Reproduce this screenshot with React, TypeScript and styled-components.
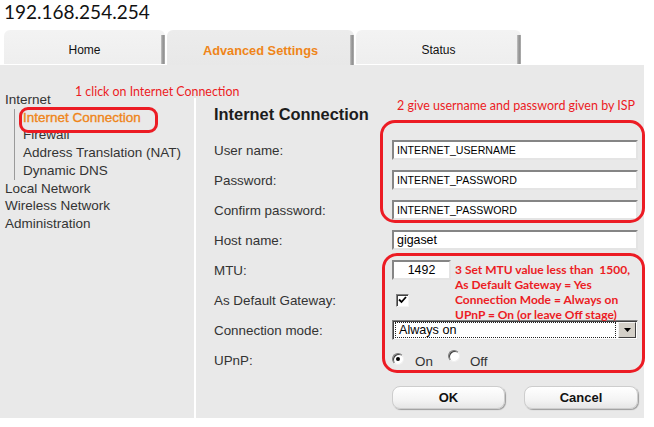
import React from 'react';
import styled, { createGlobalStyle } from 'styled-components';

const GlobalStyle = createGlobalStyle`
  html, body { margin: 0; padding: 0; background: #ffffff; }
  body { font-family: "Liberation Sans", Arial, sans-serif; }
  * { box-sizing: border-box; }
`;

const RED = '#ec1c24';
const ORANGE = '#ef8519';

const Page = styled.div`
  position: relative;
  width: 654px;
  height: 427px;
  overflow: hidden;
`;

const Address = styled.div`
  height: 30px;
  padding-left: 4px;
  font-family: Lato, "Liberation Sans", sans-serif;
  font-size: 19px;
  line-height: 24px;
  color: #111;
`;

const TabBar = styled.div`
  display: flex;
  align-items: flex-start;
  gap: 2px;
  height: 35px;
  padding-left: 4px;
`;

const Tab = styled.div<{ $w: number; $active?: boolean }>`
  position: relative;
  width: ${({ $w }) => $w}px;
  height: ${({ $active }) => ($active ? 35 : 34)}px;
  padding-top: 6px;
  display: flex;
  align-items: center;
  justify-content: center;
  border-radius: 6px 6px 0 0;
  background: ${({ $active }) =>
    $active ? 'linear-gradient(#ececec, #e8e8e8)' : 'linear-gradient(#f3f3f3, #eeeeee)'};
  color: ${({ $active }) => ($active ? ORANGE : '#111')};
  font-size: ${({ $active }) => ($active ? 12.8 : 12)}px;
  font-weight: ${({ $active }) => ($active ? 'bold' : 'normal')};

  &::after {
    content: '';
    position: absolute;
    right: 0;
    top: 5px;
    bottom: 0;
    width: 4px;
    background: linear-gradient(to right, #c4c4c4, #8e8e8e 55%, #b0b0b0);
  }
`;

const Panel = styled.div`
  display: flex;
  width: 644px;
  background: #e9e9e9;
`;

const Sidebar = styled.div`
  width: 194px;
  padding-top: 26px;
  font-size: 13.5px;
  line-height: 17.7px;
  color: #333;
`;

const NavItem = styled.div<{ $sub?: boolean; $current?: boolean }>`
  padding-left: ${({ $sub }) => ($sub ? 8 : 5)}px;
  white-space: nowrap;
  color: ${({ $current }) => ($current ? ORANGE : '#333')};
  -webkit-text-stroke: ${({ $current }) => ($current ? `0.35px ${ORANGE}` : '0')};
`;

const SubList = styled.div`
  margin-left: 14px;
  border-left: 1px solid #9a9a9a;
`;

const Divider = styled.div`
  width: 2px;
  margin-top: 33px;
  background: #ffffff;
`;

const Content = styled.div`
  flex: 1;
  padding: 39px 6px 9px 18px;
`;

const Heading = styled.h3`
  margin: 0 0 11px;
  font-size: 16.4px;
  line-height: 20px;
  font-weight: bold;
  color: #1c1c1c;
`;

const Form = styled.div`
  display: grid;
  grid-template-columns: 178px 246px;
  grid-auto-rows: 30px;
  align-items: center;
`;

const Label = styled.div`
  font-size: 13.4px;
  color: #333;
  white-space: nowrap;
`;

const Field = styled.input<{ $w?: number; $center?: boolean; $big?: boolean }>`
  display: block;
  width: ${({ $w }) => $w ?? 246}px;
  height: 20px;
  margin: 0;
  padding: 0 3px;
  border: 2px solid;
  border-color: #858585 #e4e4e4 #e4e4e4 #858585;
  background: #fff;
  font-family: "Liberation Sans", Arial, sans-serif;
  font-size: ${({ $big }) => ($big ? 12.4 : 10.6)}px;
  color: #000;
  text-align: ${({ $center }) => ($center ? 'center' : 'left')};
  outline: none;
`;

const Check = styled.span`
  display: flex;
  align-items: center;
  justify-content: center;
  width: 13px;
  height: 13px;
  margin-left: 4px;
  border: 1px solid;
  border-color: #808080 #f4f4f4 #f4f4f4 #808080;
  background: #fff;
  box-shadow: inset 1px 1px 0 #404040;
`;

const Select = styled.div`
  display: flex;
  align-items: center;
  width: 246px;
  height: 20px;
  padding: 1px;
  border: 1px solid;
  border-color: #808080 #e4e4e4 #e4e4e4 #808080;
  background: #fff;
  box-shadow: inset 1px 1px 0 #404040;
`;

const SelectValue = styled.div`
  flex: 1;
  height: 16px;
  margin: 0 2px 0 1px;
  padding-left: 3px;
  border: 1px dotted #222;
  font-size: 12.6px;
  line-height: 14px;
  color: #000;
`;

const SelectArrow = styled.div`
  display: flex;
  align-items: center;
  justify-content: center;
  width: 18px;
  height: 16px;
  background: #d4d0c8;
  border: 1px solid;
  border-color: #f4f4f4 #404040 #404040 #f4f4f4;
`;

const RadioGroup = styled.div`
  display: flex;
  align-items: center;
  font-size: 13.4px;
  color: #333;
`;

const Radio = styled.span<{ $on?: boolean; $lift?: boolean }>`
  position: relative;
  display: inline-block;
  width: 12px;
  height: 12px;
  border-radius: 50%;
  border: 1px solid;
  border-color: #7a7a7a #f0f0f0 #f0f0f0 #7a7a7a;
  background: #fff;
  box-shadow: inset 1px 1px 0 #404040;
  transform: translateY(${({ $lift }) => ($lift ? -4 : -1)}px);

  &::after {
    content: '';
    display: ${({ $on }) => ($on ? 'block' : 'none')};
    position: absolute;
    left: 3px;
    top: 3px;
    width: 4px;
    height: 4px;
    border-radius: 50%;
    background: #000;
  }
`;

const RadioText = styled.span<{ $gap: number }>`
  margin-left: ${({ $gap }) => $gap}px;
  margin-right: 15px;
  padding-top: 3px;
`;

const ButtonRow = styled.div`
  display: flex;
  gap: 19px;
  margin-top: 11px;
  padding-left: 178px;
`;

const Button = styled.button<{ $w: number }>`
  width: ${({ $w }) => $w}px;
  height: 23px;
  padding: 0;
  border: 1px solid #cdcdcd;
  border-radius: 8px;
  background: linear-gradient(#ffffff, #f4f4f4 60%, #e6e6e6);
  box-shadow: 1px 1px 1px #9c9c9c;
  font-family: "Liberation Sans", Arial, sans-serif;
  font-size: 13px;
  font-weight: bold;
  color: #111;
`;

const Ring = styled.div<{ $x: number; $y: number; $w: number; $h: number; $r: number }>`
  position: absolute;
  left: ${({ $x }) => $x}px;
  top: ${({ $y }) => $y}px;
  width: ${({ $w }) => $w}px;
  height: ${({ $h }) => $h}px;
  border: 3px solid ${RED};
  border-radius: ${({ $r }) => $r}px;
  pointer-events: none;
`;

const Note = styled.div<{ $x: number; $y: number; $size: number; $bold?: boolean }>`
  position: absolute;
  left: ${({ $x }) => $x}px;
  top: ${({ $y }) => $y}px;
  font-family: Lato, "Liberation Sans", sans-serif;
  font-size: ${({ $size }) => $size}px;
  font-weight: ${({ $bold }) => ($bold ? 'bold' : 'normal')};
  line-height: 15px;
  color: ${RED};
  white-space: pre;
`;

export default function App() {
  return (
    <Page>
      <GlobalStyle />
      <Address>192.168.254.254</Address>
      <TabBar>
        <Tab $w={161}>Home</Tab>
        <Tab $w={187} $active>
          Advanced Settings
        </Tab>
        <Tab $w={165}>Status</Tab>
      </TabBar>
      <Panel>
        <Sidebar>
          <NavItem>Internet</NavItem>
          <SubList>
            <NavItem $sub $current>
              Internet Connection
            </NavItem>
            <NavItem $sub>Firewall</NavItem>
            <NavItem $sub>Address Translation (NAT)</NavItem>
            <NavItem $sub>Dynamic DNS</NavItem>
          </SubList>
          <NavItem>Local Network</NavItem>
          <NavItem>Wireless Network</NavItem>
          <NavItem>Administration</NavItem>
        </Sidebar>
        <Divider />
        <Content>
          <Heading>Internet Connection</Heading>
          <Form>
            <Label>User name:</Label>
            <Field readOnly value="INTERNET_USERNAME" />
            <Label>Password:</Label>
            <Field readOnly value="INTERNET_PASSWORD" />
            <Label>Confirm password:</Label>
            <Field readOnly value="INTERNET_PASSWORD" />
            <Label>Host name:</Label>
            <Field readOnly value="gigaset" $big />
            <Label>MTU:</Label>
            <Field readOnly value="1492" $w={59} $center $big />
            <Label>As Default Gateway:</Label>
            <Check>
              <svg width="9" height="8" viewBox="0 0 9 8">
                <path d="M1 3.5 L3.5 6 L8 1" fill="none" stroke="#000" strokeWidth="1.8" />
              </svg>
            </Check>
            <Label>Connection mode:</Label>
            <Select>
              <SelectValue>Always on</SelectValue>
              <SelectArrow>
                <svg width="7" height="4" viewBox="0 0 7 4">
                  <path d="M0 0 H7 L3.5 4 Z" fill="#000" />
                </svg>
              </SelectArrow>
            </Select>
            <Label>UPnP:</Label>
            <RadioGroup>
              <Radio $on />
              <RadioText $gap={11}>On</RadioText>
              <Radio $lift />
              <RadioText $gap={10}>Off</RadioText>
            </RadioGroup>
          </Form>
          <ButtonRow>
            <Button $w={113}>OK</Button>
            <Button $w={114}>Cancel</Button>
          </ButtonRow>
        </Content>
      </Panel>

      <Ring $x={19} $y={107} $w={139} $h={26} $r={9} />
      <Ring $x={380} $y={120} $w={265} $h={103} $r={15} />
      <Ring $x={382} $y={253} $w={263} $h={120} $r={15} />

      <Note $x={75} $y={84} $size={12.4}>
        1 click on Internet Connection
      </Note>
      <Note $x={397} $y={98} $size={12.5}>
        2 give username and password given by ISP
      </Note>
      <Note $x={455} $y={262} $size={12} $bold>
        {'3 Set MTU value less than  1500,\nAs Default Gateway = Yes\nConnection Mode = Always on\nUPnP = On (or leave Off stage)'}
      </Note>
    </Page>
  );
}
